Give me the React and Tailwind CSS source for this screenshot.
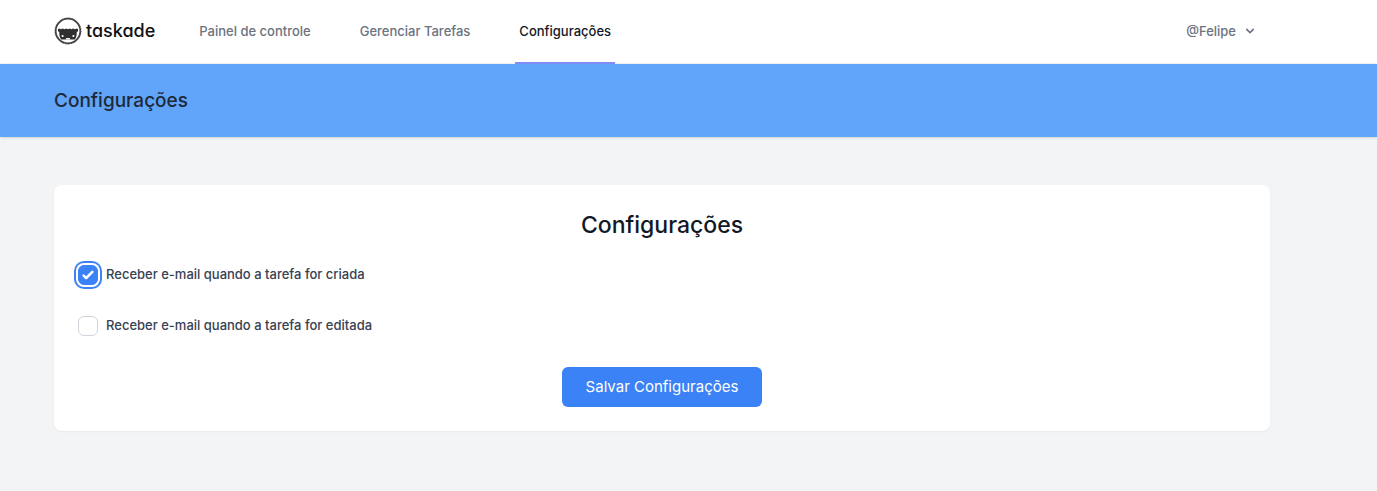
import { useState } from "react";

const links = [
  { label: "Painel de controle", href: "#painel" },
  { label: "Gerenciar Tarefas", href: "#tarefas" },
  { label: "Configurações", href: "#configuracoes", active: true },
];

function Logo() {
  return (
    <a href="#inicio" className="flex items-center gap-1 pb-0.5 text-[#111]">
      <svg viewBox="0 0 28 28" className="size-7" aria-hidden="true">
        <circle cx="14" cy="14" r="12.3" fill="none" stroke="#444" strokeWidth="1.7" />
        <circle cx="14" cy="14" r="13" fill="none" stroke="#444" strokeWidth="0.8" strokeDasharray="1.6 1.1" />
        <path
          d="M4 12 L5.4 11.4 L7 12.2 L8.8 11.4 L10.6 12.2 L12.3 11.4 L14 12.2 L15.7 11.4 L17.4 12.2 L19.2 11.4 L21 12.2 L22.6 11.4 L24 12 V14.4 L22.8 14.8 C22.8 18.6 22.2 20.8 20.8 22.4 H7.2 C5.8 20.8 5.2 18.6 5.2 14.8 L4 14.4 Z"
          fill="#303030"
        />
        <circle cx="8.6" cy="19" r="1.1" fill="#fff" />
        <circle cx="19.4" cy="19" r="1.1" fill="#fff" />
        <path d="M11.6 22.5 L12.4 21 H15.6 L16.4 22.5 Z" fill="#fff" />
      </svg>
      <span className="text-[18px] leading-6 font-medium [font-feature-settings:'cv11','ss03']">taskade</span>
    </a>
  );
}

function Option({ id, label, checked, onChange }) {
  return (
    <div className="flex h-[27px] items-center gap-2">
      <span className="relative flex size-5">
        <input
          id={id}
          type="checkbox"
          checked={checked}
          onChange={(e) => onChange(e.target.checked)}
          className="peer size-5 appearance-none rounded-md border border-[#d1d5db] bg-white outline-none checked:border-[#3b82f6] checked:bg-[#3b82f6] checked:ring-2 checked:ring-[#3b82f6] checked:ring-offset-2"
        />
        <svg
          viewBox="0 0 16 16"
          fill="#fff"
          aria-hidden="true"
          className="pointer-events-none absolute inset-0 hidden size-5 peer-checked:block"
        >
          <path d="M12.207 4.793a1 1 0 010 1.414l-5 5a1 1 0 01-1.414 0l-2-2a1 1 0 011.414-1.414L6.5 9.086l4.293-4.293a1 1 0 011.414 0z" />
        </svg>
      </span>
      <label htmlFor={id} className="pb-0.5 text-[13px] leading-5 font-medium text-[#374151]">
        {label}
      </label>
    </div>
  );
}

export default function App() {
  const [created, setCreated] = useState(true);
  const [edited, setEdited] = useState(false);

  return (
    <div className="min-h-screen bg-[#f3f4f6] font-['Inter',sans-serif]">
      <nav className="border-b border-[#f3f4f6] bg-white pr-[53px]">
        <div className="mx-auto flex h-[63px] max-w-7xl justify-between px-8">
          <div className="flex gap-10">
            <Logo />
            <div className="flex gap-[41px]">
              {links.map((l) => (
                <a
                  key={l.label}
                  href={l.href}
                  aria-current={l.active ? "page" : undefined}
                  className={
                    l.active
                      ? "-mb-px flex items-center border-b-2 border-[#818cf8] px-1 text-[13px] leading-5 font-medium text-[#111827]"
                      : "-mb-px flex items-center border-b-2 border-transparent px-1 text-[13px] leading-5 font-medium text-[#6b7280]"
                  }
                >
                  {l.label}
                </a>
              ))}
            </div>
          </div>
          <button type="button" className="flex items-center gap-1.5 px-3 pb-0.5 text-[13px] leading-4 font-medium text-[#6b7280]">
            @Felipe
            <svg viewBox="0 0 20 20" fill="currentColor" className="size-4" aria-hidden="true">
              <path
                fillRule="evenodd"
                clipRule="evenodd"
                d="M5.293 7.293a1 1 0 011.414 0L10 10.586l3.293-3.293a1 1 0 111.414 1.414l-4 4a1 1 0 01-1.414 0l-4-4a1 1 0 010-1.414z"
              />
            </svg>
          </button>
        </div>
      </nav>

      <header className="bg-[#60a5fa] pr-[53px] shadow-sm">
        <div className="mx-auto max-w-7xl px-8 py-6">
          <h2 className="text-[19px] leading-[25px] font-medium text-[#1f2937]">Configurações</h2>
        </div>
      </header>

      <main className="py-12 pr-[53px]">
        <div className="mx-auto max-w-7xl px-8">
          <form className="flex flex-col rounded-lg bg-white p-6 shadow-xs" onSubmit={(e) => e.preventDefault()}>
            <h1 className="mb-5 text-center text-[23px] leading-8 font-medium text-[#111827]">Configurações</h1>
            <div className="flex flex-col gap-6">
              <Option id="criada" label="Receber e-mail quando a tarefa for criada" checked={created} onChange={setCreated} />
              <Option id="editada" label="Receber e-mail quando a tarefa for editada" checked={edited} onChange={setEdited} />
            </div>
            <button type="submit" className="mt-7 self-center rounded-md bg-[#3b82f6] px-6 py-2 text-[15px] leading-6 font-normal text-white">
              Salvar Configurações
            </button>
          </form>
        </div>
      </main>
    </div>
  );
}
